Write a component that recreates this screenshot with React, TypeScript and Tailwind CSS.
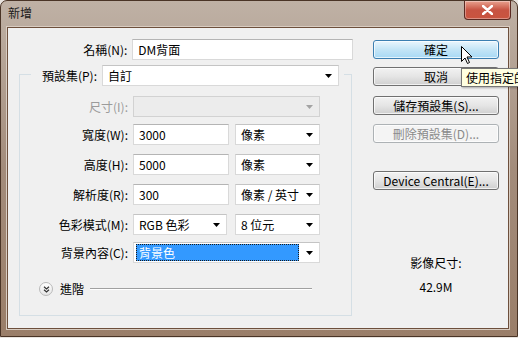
import React from 'react';

const font = { fontFamily: '"Noto Sans CJK TC", "Noto Sans", sans-serif' };

const Arrow = ({ disabled = false }: { disabled?: boolean }) => (
    <svg width="7" height="4" viewBox="0 0 7 4" className="shrink-0">
        <path d="M0 0 H7 L3.5 4 Z" fill={disabled ? '#a3a3a3' : '#000'} />
    </svg>
);

const TextBox = ({ value, w }: { value: string; w: string }) => (
    <div className={`${w} h-[21px] bg-white border border-[#d9d9d9] border-t-[#b4b4b4] flex items-center pl-[5px] text-[12px] text-black leading-none`}>
        {value}
    </div>
);

const Combo = ({ value, w, disabled = false }: { value: string; w: string; disabled?: boolean }) => (
    <div className={`${w} h-[21px] border flex items-center justify-between pl-[5px] pr-[6px] text-[12px] leading-none ${disabled ? 'bg-[#ececec] border-[#d2d2d2]' : 'bg-white border-[#d9d9d9] border-t-[#c4c4c4]'}`}>
        <span className="text-black">{value}</span>
        <Arrow disabled={disabled} />
    </div>
);

const Label = ({ text, w, disabled = false }: { text: string; w: string; disabled?: boolean }) => (
    <div className={`${w} text-right text-[12px] leading-none ${disabled ? 'text-[#9b9b9b]' : 'text-black'}`}>{text}</div>
);

const Btn = ({ text, kind = 'normal', mt }: { text: string; kind?: 'normal' | 'hover' | 'disabled'; mt: string }) => {
    const styles = {
        normal: 'border-[#707070] bg-gradient-to-b from-[#f2f2f2] via-[#e5e5e5] to-[#cfcfcf] text-black',
        hover: 'border-[#3c7fb1] bg-gradient-to-b from-[#eaf6fd] via-[#c4e5f6] to-[#a7d9f5] text-black',
        disabled: 'border-[#adb2b5] bg-[#f4f4f4] text-[#8a8a8a]',
    };
    return (
        <div className={`${mt} w-[126px] h-[19px] rounded-[3px] border flex items-center justify-center text-[12px] leading-none shadow-[inset_0_0_0_1px_rgba(255,255,255,0.7)] ${styles[kind]}`}>
            {text}
        </div>
    );
};

const App = () => {
    return (
        <div className="relative w-[518px] h-[338px] overflow-hidden bg-[#e9e4df]" style={font}>
            <div className="w-[518px] h-[337px] rounded-t-[7px] border border-[#4a3426] bg-gradient-to-b from-[#bfb1a5] via-[#a38c7b] to-[#9a7e69] flex flex-col">
                {/* title bar */}
                <div className="h-[26px] flex items-start justify-between">
                    <div className="pl-[7px] pt-[6px] text-[12px] leading-none text-[#1a1a1a]">新增</div>
                    <div className="mr-[6px] w-[47px] h-[19px] rounded-b-[4px] border border-t-0 border-[#5a2a22] bg-gradient-to-b from-[#e8a18f] via-[#c75342] to-[#c9543f] flex items-center justify-center shadow-[inset_0_0_0_1px_rgba(255,255,255,0.35)]">
                        <svg width="11" height="10" viewBox="0 0 11 10">
                            <path d="M1 1 L10 9 M10 1 L1 9" stroke="#fff" strokeWidth="2.4" strokeLinecap="round" />
                        </svg>
                    </div>
                </div>

                {/* client area */}
                <div className="ml-[6px] w-[502px] h-[302px] border border-[#6d4f3c] shadow-[0_0_0_1px_#d8ccc1] bg-[#f0f0f0] flex">
                    {/* left column */}
                    <div className="w-[345px] flex flex-col">
                        <div className="mt-[11px] flex items-center gap-[5px]">
                            <Label text="名稱(N):" w="w-[120px]" />
                            <TextBox value="DM背面" w="w-[222px]" />
                        </div>

                        {/* group box */}
                        <div className="ml-[11px] mt-[14px] w-[333px] h-[242px] border border-[#d5dfe5] flex flex-col">
                            <div className="-mt-[10px] ml-[11px] w-[313px] bg-[#f0f0f0] flex items-center gap-[5px]">
                                <Label text="預設集(P):" w="w-[66px]" />
                                <Combo value="自訂" w="w-[237px]" />
                            </div>

                            <div className="mt-[10px] flex items-center gap-[5px]">
                                <Label text="尺寸(I):" w="w-[108px]" disabled />
                                <Combo value="" w="w-[187px]" disabled />
                            </div>

                            <div className="mt-[7px] flex items-center gap-[5px]">
                                <Label text="寬度(W):" w="w-[108px]" />
                                <TextBox value="3000" w="w-[96px]" />
                                <div className="ml-[1px]"><Combo value="像素" w="w-[85px]" /></div>
                            </div>

                            <div className="mt-[9px] flex items-center gap-[5px]">
                                <Label text="高度(H):" w="w-[108px]" />
                                <TextBox value="5000" w="w-[96px]" />
                                <div className="ml-[1px]"><Combo value="像素" w="w-[85px]" /></div>
                            </div>

                            <div className="mt-[9px] flex items-center gap-[5px]">
                                <Label text="解析度(R):" w="w-[108px]" />
                                <TextBox value="300" w="w-[96px]" />
                                <div className="ml-[1px]"><Combo value="像素 / 英寸" w="w-[85px]" /></div>
                            </div>

                            <div className="mt-[9px] flex items-center gap-[5px]">
                                <Label text="色彩模式(M):" w="w-[108px]" />
                                <Combo value="RGB 色彩" w="w-[94px]" />
                                <div className="ml-[3px]"><Combo value="8 位元" w="w-[85px]" /></div>
                            </div>

                            <div className="mt-[7px] flex items-center gap-[5px]">
                                <Label text="背景內容(C):" w="w-[108px]" />
                                <div className="w-[187px] h-[21px] bg-white border border-[#d9d9d9] border-t-[#c4c4c4] flex items-center pl-[2px] pr-[6px] gap-[7px]">
                                    <div className="flex-1 h-[17px] bg-[#3399ff] outline-1 outline-dotted outline-[#1a1a1a] -outline-offset-1 flex items-center pl-[3px] text-[12px] leading-none text-white">
                                        背景色
                                    </div>
                                    <Arrow />
                                </div>
                            </div>

                            <div className="mt-[19px] ml-[19px] mr-[39px] flex items-center">
                                <div className="w-[14px] h-[14px] rounded-full border border-[#b9b9b9] bg-gradient-to-b from-white to-[#e6e6e6] flex items-center justify-center">
                                    <svg width="7" height="7" viewBox="0 0 7 7">
                                        <path d="M1 0.8 L3.5 3 L6 0.8 M1 3.8 L3.5 6 L6 3.8" stroke="#333" strokeWidth="1.2" fill="none" />
                                    </svg>
                                </div>
                                <div className="ml-[7px] text-[12px] leading-none text-black">進階</div>
                                <div className="ml-[6px] flex-1 h-[1px] bg-[#a0a0a0] border-b border-white box-content" />
                            </div>
                        </div>
                    </div>

                    {/* right column */}
                    <div className="ml-[20px] w-[126px] flex flex-col items-center">
                        <Btn text="確定" kind="hover" mt="mt-[12px]" />
                        <Btn text="取消" mt="mt-[8px]" />
                        <Btn text="儲存預設集(S)..." mt="mt-[10px]" />
                        <Btn text="刪除預設集(D)..." kind="disabled" mt="mt-[9px]" />
                        <Btn text="Device Central(E)..." mt="mt-[28px]" />
                        <div className="mt-[67px] text-[12px] leading-none text-black">影像尺寸:</div>
                        <div className="mt-[12px] text-[12px] leading-none text-black">42.9M</div>
                    </div>
                </div>
            </div>

            {/* tooltip */}
            <div className="absolute left-[461px] top-[68px] h-[19px] border border-[#767676] bg-[#ffffe1] pl-[4px] pr-[4px] flex items-center text-[12px] leading-none text-black whitespace-nowrap shadow-[1px_1px_2px_rgba(0,0,0,0.3)]">
                使用指定的設定
            </div>

            {/* cursor */}
            <svg className="absolute left-[461px] top-[46px]" width="12" height="19" viewBox="0 0 12 19">
                <path d="M0.5 0.5 V15.5 L4 12 L6.5 17.5 L8.5 16.5 L6 11 H11 Z" fill="#fff" stroke="#000" strokeWidth="1" strokeLinejoin="round" />
            </svg>
        </div>
    );
};

export default App;
